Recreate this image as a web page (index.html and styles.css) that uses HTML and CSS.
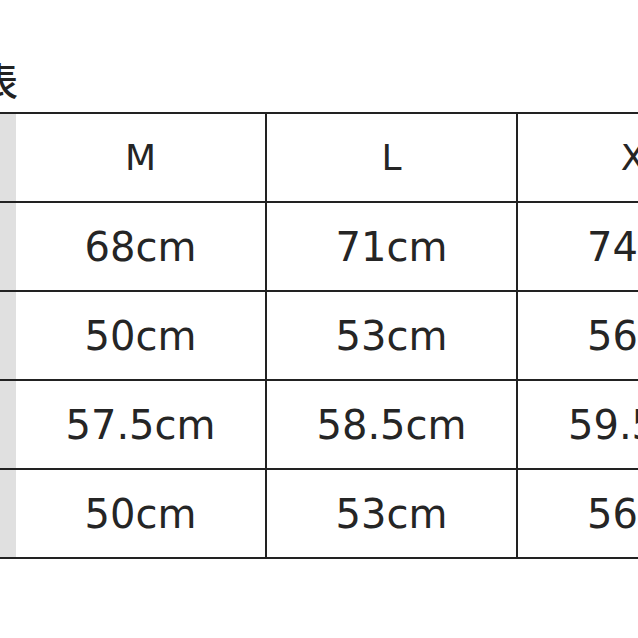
FILE: index.html
```html
<!DOCTYPE html>
<html lang="ja">
<head>
<meta charset="utf-8">
<title>サイズ表</title>
<link rel="stylesheet" href="styles.css">
</head>
<body>
<div class="page">
  <div class="title-wrap"><h2 class="title">サイズ表</h2></div>
  <div class="table">
    <div class="cell label">サイズ</div>
    <div class="cell head">M</div>
    <div class="cell head sep">L</div>
    <div class="cell head sep">XL</div>

    <div class="cell label">着丈</div>
    <div class="cell">68cm</div>
    <div class="cell sep">71cm</div>
    <div class="cell sep">74cm</div>

    <div class="cell label">身幅</div>
    <div class="cell">50cm</div>
    <div class="cell sep">53cm</div>
    <div class="cell sep">56cm</div>

    <div class="cell label">袖丈</div>
    <div class="cell">57.5cm</div>
    <div class="cell sep">58.5cm</div>
    <div class="cell sep">59.5cm</div>

    <div class="cell label">肩幅</div>
    <div class="cell">50cm</div>
    <div class="cell sep">53cm</div>
    <div class="cell sep">56cm</div>
  </div>
</div>
</body>
</html>
```

FILE: styles.css
```css
html, body {
  margin: 0;
  padding: 0;
  background: #ffffff;
}

.page {
  padding-top: 60px;
  overflow: hidden;
  width: 638px;
  height: 638px;
  box-sizing: border-box;
}

.title-wrap {
  width: 18px;
  display: flex;
  justify-content: flex-end;
  height: 38px;
  margin-bottom: 14px;
}

.title {
  margin: 0;
  font-family: "Noto Sans CJK JP", sans-serif;
  font-weight: 500;
  font-size: 38px;
  line-height: 38px;
  color: #222222;
  white-space: nowrap;
  flex: none;
}

.table {
  display: grid;
  grid-template-columns: 200px 249px 251px 252px;
  margin-left: -184px;
  border-top: 2px solid #222222;
  width: max-content;
}

.cell {
  height: 87px;
  border-bottom: 2px solid #222222;
  display: flex;
  align-items: center;
  justify-content: center;
  font-family: "DejaVu Sans", sans-serif;
  font-size: 40px;
  color: #252525;
  background: #ffffff;
}

.sep {
  border-left: 2px solid #222222;
}

.label {
  background: #e0e0e0;
  font-family: "Noto Sans CJK JP", sans-serif;
  font-size: 30px;
}

.head {
  font-size: 36px;
}
```
